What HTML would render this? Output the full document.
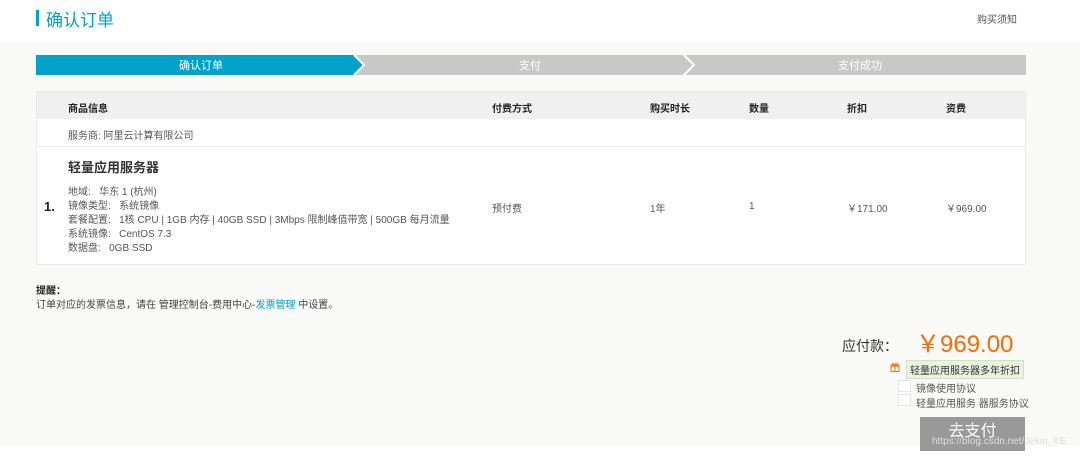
<!DOCTYPE html>
<html><head><meta charset="utf-8"><style>
*{margin:0;padding:0;box-sizing:border-box}
body{width:1080px;height:456px;background:#fff;font-family:"Liberation Sans","Noto Sans CJK SC",sans-serif;color:#333;font-size:10px;position:relative;overflow:hidden}
.abs{position:absolute;white-space:nowrap}
.gray{position:absolute;left:0;top:42px;width:1080px;height:404px;background:#f9f9f8}
</style></head><body>
<div class="abs" style="left:36px;top:10px;width:3px;height:16px;background:#00a2ca"></div>
<div class="abs" style="left:46px;top:6px;font-size:17px;color:#00a2ca">确认订单</div>
<div class="abs" style="left:977px;top:11px;font-size:10px;color:#555">购买须知</div>
<div class="gray"></div>
<svg class="abs" style="left:36px;top:55px" width="990" height="20">
<rect x="0" y="0" width="990" height="20" fill="#c8c8c8"/>
<polygon points="0,0 318,0 328,10 318,20 0,20" fill="#00a2ca"/>
<polyline points="318,0 328,10 318,20" fill="none" stroke="#fff" stroke-width="2"/>
<polyline points="648,0 658,10 648,20" fill="none" stroke="#fff" stroke-width="2"/>
<text x="165" y="14" font-size="11" fill="#fff" text-anchor="middle" font-family="Liberation Sans,Noto Sans CJK SC,sans-serif">确认订单</text>
<text x="494" y="14" font-size="11" fill="#fff" text-anchor="middle" font-family="Liberation Sans,Noto Sans CJK SC,sans-serif">支付</text>
<text x="824" y="14" font-size="11" fill="#fff" text-anchor="middle" font-family="Liberation Sans,Noto Sans CJK SC,sans-serif">支付成功</text>
</svg>
<div class="abs" style="left:36px;top:91px;width:990px;height:174px;background:#fff;border:1px solid #eaeaea"></div>
<div class="abs" style="left:37px;top:92px;width:988px;height:27px;background:#f0f0f0"></div>
<div class="abs" style="left:37px;top:146px;width:988px;height:1px;background:#eaeaea"></div>
<div class="abs" style="left:68px;top:100px;font-weight:bold;color:#222">商品信息</div>
<div class="abs" style="left:492px;top:100px;font-weight:bold;color:#222">付费方式</div>
<div class="abs" style="left:650px;top:100px;font-weight:bold;color:#222">购买时长</div>
<div class="abs" style="left:749px;top:100px;font-weight:bold;color:#222">数量</div>
<div class="abs" style="left:847px;top:100px;font-weight:bold;color:#222">折扣</div>
<div class="abs" style="left:946px;top:100px;font-weight:bold;color:#222">资费</div>
<div class="abs" style="left:68px;top:127px;color:#555">服务商: 阿里云计算有限公司</div>
<div class="abs" style="left:68px;top:157px;font-size:13px;font-weight:bold;color:#333">轻量应用服务器</div>
<div class="abs" style="left:44px;top:199px;font-size:13px;font-weight:bold;color:#222">1.</div>
<div class="abs" style="left:68px;top:186px;color:#555;line-height:14px">地域:&nbsp;&nbsp; 华东 1 (杭州)<br>镜像类型:&nbsp;&nbsp; 系统镜像<br>套餐配置:&nbsp;&nbsp; 1核 CPU | 1GB 内存 | 40GB SSD | 3Mbps 限制峰值带宽 | 500GB 每月流量<br>系统镜像:&nbsp;&nbsp; CentOS 7.3<br>数据盘:&nbsp;&nbsp; 0GB SSD</div>
<div class="abs" style="left:492px;top:200px;color:#555">预付费</div>
<div class="abs" style="left:650px;top:200px;color:#555">1年</div>
<div class="abs" style="left:749px;top:201px;color:#555">1</div>
<div class="abs" style="left:847px;top:200px;color:#555">￥171.00</div>
<div class="abs" style="left:946px;top:200px;color:#555">￥969.00</div>
<div class="abs" style="left:36px;top:282px;font-weight:bold;color:#222">提醒：</div>
<div class="abs" style="left:36px;top:296px;color:#444">订单对应的发票信息，请在 管理控制台-费用中心-<span style="color:#00a2ca">发票管理</span> 中设置。</div>
<div class="abs" style="left:842px;top:336px;font-size:14px;color:#333">应付款：</div>
<div class="abs" style="left:916px;top:324px;font-size:24px;color:#ff6a00">￥969.00</div>
<svg class="abs" style="left:890px;top:362px" width="10" height="10" viewBox="0 0 10 10"><rect x="1" y="4" width="8" height="5.5" fill="none" stroke="#ff6a00"/><rect x="0.5" y="2.5" width="9" height="2" fill="#ff6a00"/><line x1="5" y1="2" x2="5" y2="10" stroke="#ff6a00"/><path d="M5 2.5 C3 0 1.5 1.5 3 2.5 M5 2.5 C7 0 8.5 1.5 7 2.5" fill="none" stroke="#ff6a00" stroke-width="0.8"/></svg>
<div class="abs" style="left:906px;top:360px;padding:1px 3px;background:#e8f3e0;border:1px solid #cfe3c0;font-size:10px;color:#333">轻量应用服务器多年折扣</div>
<div class="abs" style="left:898px;top:380px;width:13px;height:12px;border:1px solid #e5e5e5;background:#fff"></div>
<div class="abs" style="left:898px;top:394px;width:13px;height:12px;border:1px solid #e5e5e5;background:#fff"></div>
<div class="abs" style="left:916px;top:380px;color:#555">镜像使用协议</div>
<div class="abs" style="left:916px;top:395px;color:#555">轻量应用服务 器服务协议</div>
<div class="abs" style="left:920px;top:417px;width:105px;height:34px;background:#999;color:#fff;font-size:16px;text-align:center;line-height:30px">去支付</div>
<div class="abs" style="left:932px;top:436px;font-size:10px;color:#ddd">https://blog.csdn.net/Jekin_KE</div>
</body></html>
